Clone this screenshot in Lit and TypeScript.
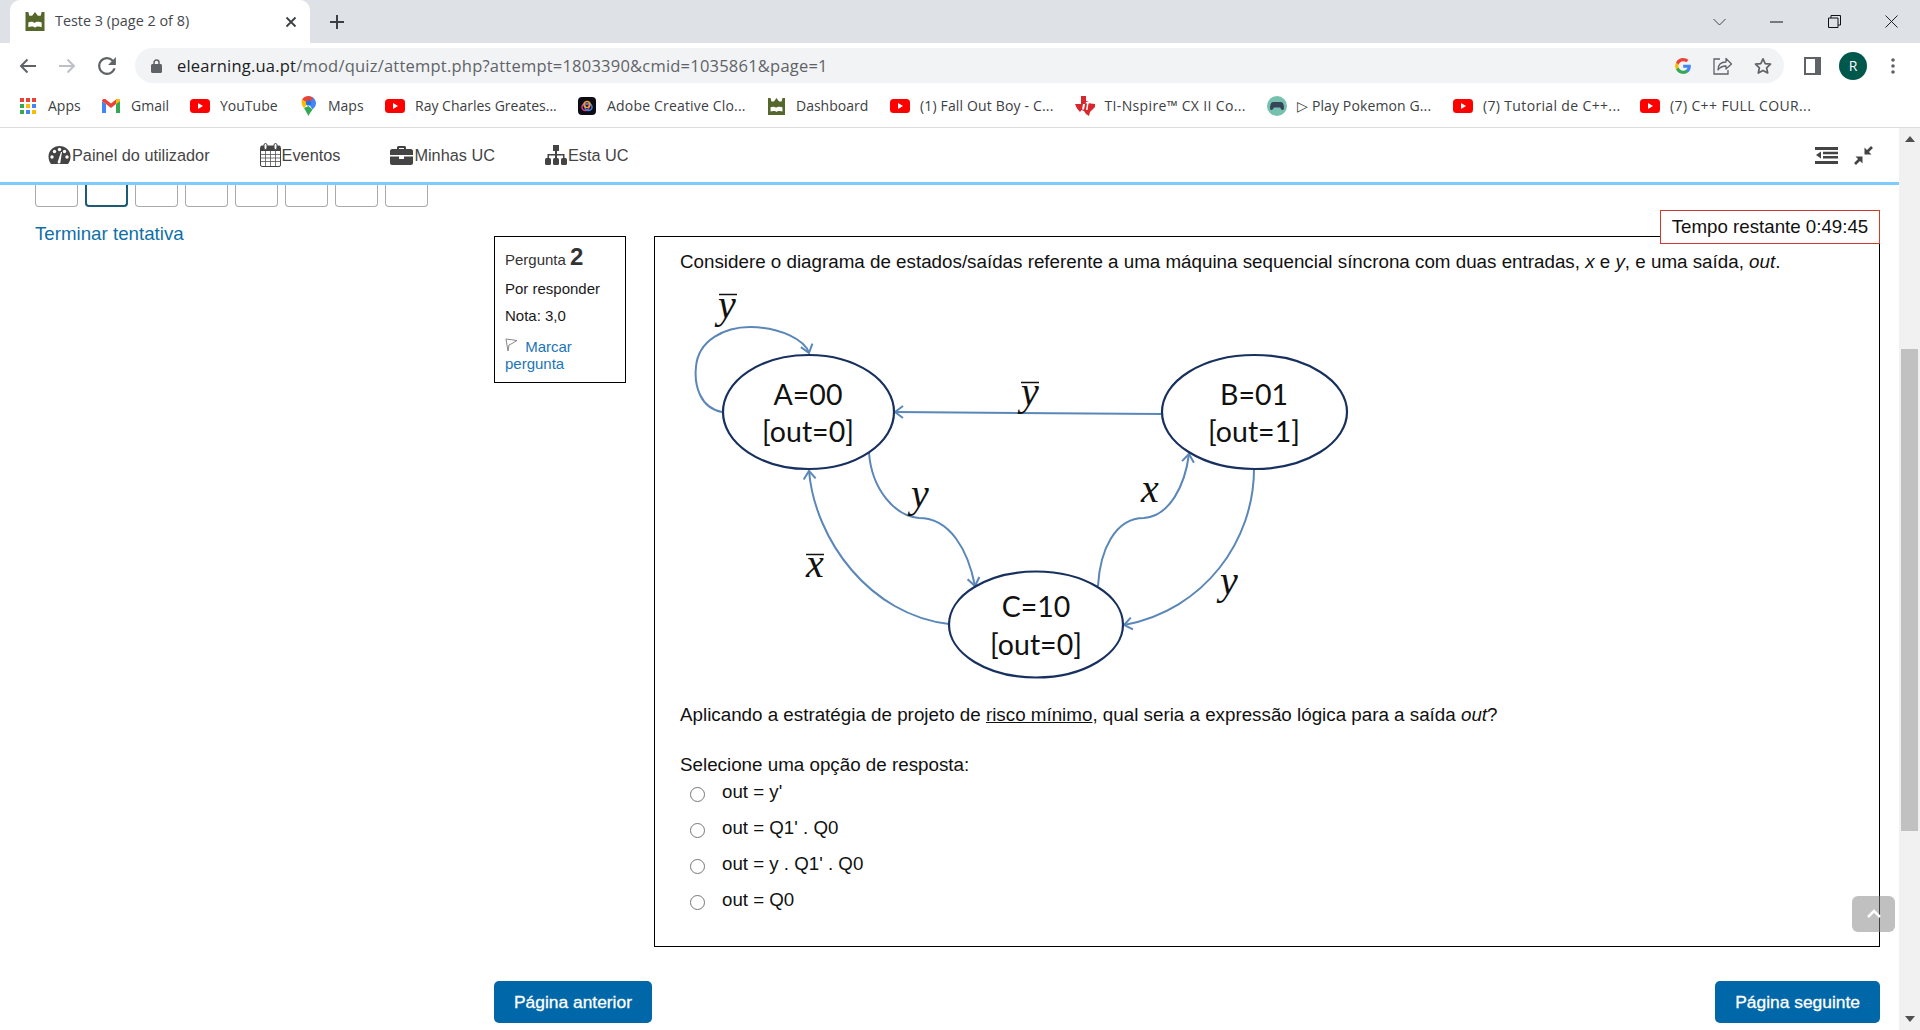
import { LitElement, html, css } from 'lit';
import { customElement } from 'lit/decorators.js';

// chrome favicons / icons
const castle = (w: number, h: number) => html`<svg width=${w} height=${h} viewBox="0 0 20 20">
  <path fill="#55672b" d="M0 0h3l1 4h3l3-4 3 4h3l1-4h3v20H0z" />
  <path fill="#fff" d="M3 11c2-1 5-1 6.500 .5C11 10 15 10 17 11v5c-2-1-6-1-7 .5C9 15 5 15 3 16z" />
</svg>`;

const youtube = html`<svg width="20" height="14" viewBox="0 0 20 14">
  <rect width="20" height="14" rx="3.500" fill="#f00" />
  <path d="M8 4l5 3-5 3z" fill="#fff" />
</svg>`;

const apps = html`<svg width="16" height="16" viewBox="0 0 16 16">
  ${[
    ['#ea4335', 0, 0], ['#ea4335', 6, 0], ['#ea4335', 12, 0],
    ['#34a853', 0, 6], ['#fbbc05', 6, 6], ['#4285f4', 12, 6],
    ['#34a853', 0, 12], ['#4285f4', 6, 12], ['#fbbc05', 12, 12],
  ].map(([c, x, y]) => html`<svg x=${x as number} y=${y as number} width="4" height="4"><rect width="4" height="4" fill=${c as string} /></svg>`)}
</svg>`;

const gmail = html`<svg width="18" height="14" viewBox="0 0 18 14">
  <path fill="#4285f4" d="M0 2v12h4V5z" />
  <path fill="#34a853" d="M14 5v9h4V2z" />
  <path fill="#ea4335" d="M0 2c0-2 2.500-2.500 4-1.500L9 4.500 14 .5C15.500-.5 18 0 18 2l-4 3-5 4-5-4z" />
  <path fill="#fbbc05" d="M14 .5C15.500-.5 18 0 18 2l-4 3z" />
</svg>`;

const maps = html`<svg width="15" height="20" viewBox="0 0 15 20">
  <path fill="#34a853" d="M3 12l4.500 8c1-2.500 2.500-4 4-6.500L7.500 10z" />
  <path fill="#fbbc05" d="M1 3.500C0 6 .5 9.500 3 12l4.500-5z" />
  <path fill="#4285f4" d="M7.500 0c3.500 0 7.500 3 7.500 7.500 0 2.500-2 4.500-3.500 6L7.500 7.500z" />
  <path fill="#ea4335" d="M1 3.500C2.500 1 5 0 7.500 0L12.500 2 7.500 7.500 4.500 5.500z" />
  <circle cx="7.500" cy="7" r="2.600" fill="#1a73e8" />
</svg>`;

const adobe = html`<svg width="18" height="18" viewBox="0 0 18 18">
  <rect width="18" height="18" rx="4" fill="#0c0c14" />
  <circle cx="7.500" cy="10" r="3.500" fill="none" stroke="#e63a8a" stroke-width="1.500" />
  <circle cx="10.500" cy="10" r="3.500" fill="none" stroke="#3a8ae6" stroke-width="1.500" />
  <circle cx="9" cy="7.500" r="3" fill="none" stroke="#f0a030" stroke-width="1.500" />
</svg>`;

const ti = html`<svg width="20" height="20" viewBox="0 0 20 20">
  <path fill="#d9262c" d="M6 0h5v5l3 1 1.500 1.500L20 8v3l-3 3-2 2-1 4-3-2-2-3-2.500-1-1.500 2-3-3.500L0 8h6z" />
  <path fill="#fff" d="M11 6h4l-.5 1.500h-1L12.500 14h-1.500l1-6.500h-1.300zM8 8h2l-1 5.500H7z" />
</svg>`;

const gamepad = html`<svg width="20" height="20" viewBox="0 0 20 20">
  <circle cx="10" cy="10" r="10" fill="#76c0ae" />
  <path fill="#36455a" d="M6 6h8c2 0 3 3 3 6 0 2-2 3-3 1l-1-1.500H7L6 13c-1 2-3 1-3-1 0-3 1-6 3-6z" />
</svg>`;

// w = width of the item, ls = tracking, segoe runs a bit wider than open sans on these
const bookmarks = [
  { icon: apps, label: 'Apps', w: 83, ls: 0 },
  { icon: gmail, label: 'Gmail', w: 89, ls: 0 },
  { icon: youtube, label: 'YouTube', w: 108, ls: 0 },
  { icon: maps, label: 'Maps', w: 87, ls: 0 },
  { icon: youtube, label: 'Ray Charles Greates...', w: 192, ls: 0 },
  { icon: adobe, label: 'Adobe Creative Clo...', w: 189, ls: 0.18 },
  { icon: castle(17, 21), label: 'Dashboard', w: 124, ls: 0 },
  { icon: youtube, label: '(1) Fall Out Boy - C...', w: 184.5, ls: 0.16 },
  { icon: ti, label: 'TI-Nspire™ CX II Co...', w: 192.5, ls: 0.35 },
  { icon: gamepad, label: '▷ Play Pokemon G...', w: 186, ls: 0.12 },
  { icon: youtube, label: '(7) Tutorial de C++...', w: 187, ls: 0.35 },
  { icon: youtube, label: '(7) C++ FULL COUR...', w: 180, ls: 0.38 },
];

// moodle top bar icons
const gauge = html`<svg width="23" height="20" viewBox="0 0 22 20">
  <path fill="#444" d="M11 1C5 1 0 5.500 0 11.500c0 3 1 5.500 2.500 7.500h17c1.500-2 2.500-4.500 2.500-7.500C22 5.500 17 1 11 1z" />
  <g fill="#fff">
    <circle cx="3.500" cy="12" r="1.700" /><circle cx="6" cy="6.500" r="1.700" /><circle cx="11" cy="4.500" r="1.700" />
    <circle cx="16" cy="6.500" r="1.700" /><circle cx="18.500" cy="12" r="1.700" />
    <path d="M9.500 16l3-9h1l-1.500 9.500a1.500 1.500 0 1 1-2.500-.5z" />
  </g>
</svg>`;

const calendar = html`<svg width="21" height="24" viewBox="0 0 21 24">
  <rect x=".5" y="3" width="20" height="20.500" rx="1.500" fill="#fff" stroke="#444" />
  <path fill="#444" d="M1 3h19v5H1z" />
  <path stroke="#555" stroke-width=".8" fill="none" d="M1 11.500h19M1 15h19M1 18.500h19M5.500 8v15M10.500 8v15M15.500 8v15" />
  <rect x="4" y=".5" width="3" height="6" rx="1.500" fill="#fff" stroke="#444" />
  <rect x="14" y=".5" width="3" height="6" rx="1.500" fill="#fff" stroke="#444" />
</svg>`;

const briefcase = html`<svg width="23" height="19" viewBox="0 0 23 19">
  <path fill="#444" d="M7 3V1.500C7 .7 7.700 0 8.500 0h6c.8 0 1.500.7 1.500 1.500V3h5c1 0 2 1 2 2v4H0V5c0-1 1-2 2-2zm2 0h5V2H9z" />
  <path fill="#444" d="M0 10.500h9V13h5v-2.500h9V17c0 1-1 2-2 2H2c-1 0-2-1-2-2z" />
</svg>`;

const sitemap = html`<svg width="22" height="20" viewBox="0 0 22 20">
  <path fill="#444" d="M8 0h6v6h-2v3h7.500v4H18v-2.500h-6V13h-2v-2.500H4V13H2.500V9H10V6H8z" />
  <rect x="0" y="13" width="6" height="7" rx="1.500" fill="#444" />
  <rect x="8" y="13" width="6" height="7" rx="1.500" fill="#444" />
  <rect x="16" y="13" width="6" height="7" rx="1.500" fill="#444" />
</svg>`;

const options = ["out = y'", "out = Q1' . Q0", "out = y . Q1' . Q0", 'out = Q0'];

@customElement('app-root')
export class AppRoot extends LitElement {
  static styles = css`
    :host {
      display: flex;
      flex-direction: column;
      width: 1920px;
      height: 1030px;
      overflow: hidden;
      background: #fff;
      font-family: 'Liberation Sans', Arial, sans-serif;
      color: #1a1a1a;
    }

    /* browser frame */
    .tabs {
      height: 43px;
      flex: none;
      display: flex;
      background: #dee1e6;
      font-family: 'Open Sans', sans-serif;
    }
    .tab {
      width: 300px;
      margin-left: 10px;
      box-sizing: border-box;
      padding: 0 13px 0 15px;
      display: flex;
      align-items: center;
      background: #fff;
      border-radius: 10px 10px 0 0;
      font-size: 14.4px;
      color: #45494e;
    }
    .tab span {
      margin: 0 0 2px 10px;
      flex: 1;
    }
    .plus {
      margin-left: 19px;
      align-self: center;
      display: flex;
    }
    .win {
      margin-left: auto;
      display: flex;
      align-items: center;
      padding-right: 22px;
      gap: 44.5px;
      height: 43px;
    }
    .toolbar {
      height: 42px;
      flex: none;
      box-sizing: border-box;
      padding-top: 3px;
      display: flex;
      align-items: center;
      font-family: 'Open Sans', sans-serif;
    }
    .nav-btns {
      width: 135px;
      box-sizing: border-box;
      padding-left: 19px;
      display: flex;
      gap: 21px;
      align-items: center;
    }
    .omni {
      width: 1649px;
      height: 35px;
      box-sizing: border-box;
      padding: 0 12px 0 16px;
      display: flex;
      align-items: center;
      background: #f1f3f4;
      border-radius: 18px;
    }
    .url {
      margin-left: 15px;
      font-size: 16.5px;
      letter-spacing: 0.22px;
      color: #5f6368;
      flex: 1;
    }
    .url b {
      font-weight: 400;
      color: #202124;
    }
    .omni-icons {
      display: flex;
      align-items: center;
      gap: 22px;
    }
    .tool-right {
      display: flex;
      align-items: center;
      padding-left: 20px;
      gap: 18px;
    }
    .tool-right .dots {
      margin-left: 6px;
    }
    .avatar {
      width: 28px;
      height: 28px;
      border-radius: 50%;
      background: #00574b;
      color: #fff;
      font-size: 14px;
      display: flex;
      align-items: center;
      justify-content: center;
    }
    .bookmarks {
      height: 43px;
      flex: none;
      box-sizing: border-box;
      border-bottom: 1px solid #dadce0;
      padding: 0 0 0 18px;
      display: flex;
      align-items: center;
      font-family: 'Open Sans', sans-serif;
      font-size: 14px;
      color: #3c4043;
      white-space: nowrap;
    }
    .bm {
      flex: none;
      display: flex;
      align-items: center;
      gap: 10px;
    }
    .bm .slot {
      width: 20px;
      display: flex;
      justify-content: center;
    }
    .bm svg {
      display: block;
    }
    .bm .label {
      margin-bottom: 1px;
    }

    /* page */
    .page {
      flex: 1;
      min-height: 0;
      display: flex;
    }
    .main {
      width: 1899px;
      position: relative;
    }
    .topnav {
      height: 57px;
      box-sizing: border-box;
      border-bottom: 3px solid #7fcbff;
      padding: 0 26px 0 48px;
      display: flex;
      align-items: center;
      gap: 50px;
      font-size: 16.3px;
      color: #444;
    }
    .topnav a {
      display: flex;
      align-items: center;
      gap: 1px;
    }
    .topnav .right {
      margin-left: auto;
      display: flex;
      align-items: center;
      gap: 16px;
    }
    .body {
      display: flex;
    }
    .side {
      width: 494px;
      flex: none;
      box-sizing: border-box;
      padding-left: 35px;
    }
    .qnboxes {
      display: flex;
      gap: 7px;
    }
    .qnbox {
      width: 43px;
      height: 22px;
      box-sizing: border-box;
      border: 1px solid #aaa;
      border-top: 0;
      border-radius: 0 0 4px 4px;
    }
    .qnbox.current {
      border: 2px solid #1d5a73;
      border-top: 0;
    }
    .finish {
      margin-top: 15px;
      font-size: 18.72px;
      line-height: 24px;
      color: #0f6fa8;
    }
    .quiz {
      width: 1386px;
      padding-top: 51px;
    }
    .question {
      display: flex;
      gap: 28px;
    }
    .info {
      width: 132px;
      height: 147px;
      flex: none;
      box-sizing: border-box;
      border: 1px solid #000;
      padding: 6px 10px 0;
      font-size: 15px;
    }
    .info .no {
      line-height: 28px;
      color: #333;
    }
    .info .no b {
      font-size: 24px;
    }
    .info .state {
      margin-top: 3px;
      line-height: 24px;
    }
    .info .grade {
      margin-top: 3px;
      line-height: 24px;
    }
    .info .flag {
      margin-top: 10px;
      line-height: 17px;
      color: #1b75bb;
    }
    .info .flag svg {
      margin-right: 3px;
    }
    .content {
      width: 1226px;
      height: 711px;
      box-sizing: border-box;
      border: 1px solid #000;
      padding: 12px 0 0 25px;
      position: relative;
      font-size: 18.8px;
      line-height: 26px;
      color: #111;
    }
    .timer {
      position: absolute;
      top: -27px;
      right: -1px;
      width: 220px;
      height: 34px;
      box-sizing: border-box;
      border: 1px solid #cf3a2c;
      background: #fff;
      font-size: 18.72px;
      text-align: center;
      line-height: 31px;
    }
    .diagram {
      display: block;
      margin-left: -25px;
    }
    .diagram .state-text {
      font-family: Lato, sans-serif;
      font-size: 28.5px;
      text-anchor: middle;
      fill: #111;
    }
    .diagram .math {
      font-family: 'Liberation Serif', serif;
      font-style: italic;
      font-size: 40px;
      text-anchor: middle;
      fill: #111;
    }
    .prompt {
      margin-top: 24px;
    }
    .answers {
      margin-top: -4px;
      padding-left: 10px;
    }
    .answer {
      height: 36px;
      display: flex;
      align-items: center;
      font-size: 18.72px;
    }
    .answer input {
      width: 15px;
      height: 15px;
      margin: 5px 17px 0 0;
      accent-color: #767676;
    }
    .underline {
      text-decoration: underline;
    }
    .buttons {
      margin-top: 34px;
      display: flex;
      justify-content: space-between;
    }
    .btn {
      height: 42px;
      box-sizing: border-box;
      padding: 0 20px;
      display: flex;
      align-items: center;
      background: #0067a8;
      color: #fff;
      border-radius: 5px;
      font-size: 17.4px;
      -webkit-text-stroke: 0.3px #fff;
    }
    .to-top {
      position: absolute;
      left: 1852px;
      top: 768px;
      width: 43px;
      height: 36px;
      border-radius: 6px;
      background: rgba(130, 130, 130, 0.5);
      display: flex;
      align-items: center;
      justify-content: center;
    }

    /* scrollbar */
    .scroll {
      width: 21px;
      flex: none;
      display: flex;
      flex-direction: column;
      align-items: center;
      background: #f1f1f1;
    }
    .arrow-up,
    .arrow-down {
      width: 0;
      height: 0;
      border-left: 5px solid transparent;
      border-right: 5px solid transparent;
    }
    .arrow-up {
      margin-top: 8px;
      border-bottom: 6px solid #505050;
    }
    .arrow-down {
      margin-top: 185px;
      border-top: 6px solid #505050;
    }
    .thumb {
      margin-top: 207px;
      width: 17px;
      height: 482px;
      background: #c1c1c1;
    }
  `;

  render() {
    return html`
      <div class="tabs">
        <div class="tab">
          ${castle(20, 19)}
          <span>Teste 3 (page 2 of 8)</span>
          <svg width="12" height="12" viewBox="0 0 12 12"><path d="M1.500 1.500l9 9m0-9l-9 9" stroke="#3c4043" stroke-width="1.800" /></svg>
        </div>
        <div class="plus">
          <svg width="16" height="16" viewBox="0 0 16 16"><path d="M8 1v14M1 8h14" stroke="#3c4043" stroke-width="2" /></svg>
        </div>
        <div class="win">
          <svg width="13" height="8" viewBox="0 0 13 8"><path d="M.5 1l6 6 6-6" fill="none" stroke="#444" /></svg>
          <svg width="13" height="2" viewBox="0 0 13 2"><path d="M0 1h13" stroke="#111" /></svg>
          <svg width="13" height="13" viewBox="0 0 13 13"><path d="M.5 3h9.500v9.500H.5zM3 3V.5h9.500V10H10" fill="none" stroke="#111" /></svg>
          <svg width="13" height="13" viewBox="0 0 13 13"><path d="M.5.500l12 12m0-12l-12 12" stroke="#222" /></svg>
        </div>
      </div>

      <div class="toolbar">
        <div class="nav-btns">
          <svg width="18" height="16" viewBox="0 0 18 16"><path d="M17 8H2M8.500 1.500L2 8l6.500 6.500" fill="none" stroke="#5f6368" stroke-width="2" /></svg>
          <svg width="18" height="16" viewBox="0 0 18 16"><path d="M1 8h15M9.500 1.500L16 8l-6.500 6.500" fill="none" stroke="#bdc1c6" stroke-width="2" /></svg>
          <svg width="20" height="20" viewBox="3 3 18 18"><path fill="#5f6368" d="M17.650 6.350A7.958 7.958 0 0 0 12 4c-4.420 0-7.990 3.580-7.990 8s3.570 8 7.990 8c3.730 0 6.840-2.550 7.730-6h-2.080A5.990 5.990 0 0 1 12 18c-3.310 0-6-2.690-6-6s2.690-6 6-6c1.660 0 3.140.690 4.220 1.780L13 11h7V4l-2.350 2.350z" /></svg>
        </div>
        <div class="omni">
          <svg width="11" height="14" viewBox="0 0 11 14"><path fill="#5f6368" d="M1.500 5h8c.8 0 1.500.7 1.500 1.500v6c0 .8-.7 1.500-1.500 1.500h-8C.7 14 0 13.300 0 12.500v-6C0 5.700.7 5 1.500 5z" /><path fill="none" stroke="#5f6368" stroke-width="1.500" d="M3 5V3.500a2.500 2.500 0 0 1 5 0V5" /></svg>
          <div class="url"><b>elearning.ua.pt</b>/mod/quiz/attempt.php?attempt=1803390&amp;cmid=1035861&amp;page=1</div>
          <div class="omni-icons">
            <svg width="16" height="16" viewBox="0 0 24 24">
              <path fill="#4285f4" d="M23.745 12.270c0-.790-.070-1.540-.190-2.270h-11.300v4.510h6.470c-.290 1.480-1.140 2.730-2.400 3.580v3h3.860c2.260-2.090 3.560-5.170 3.560-8.820z" />
              <path fill="#34a853" d="M12.255 24c3.240 0 5.950-1.080 7.930-2.910l-3.860-3c-1.080.720-2.450 1.160-4.070 1.160-3.130 0-5.780-2.110-6.730-4.960h-3.980v3.090C3.515 21.300 7.565 24 12.255 24z" />
              <path fill="#fbbc05" d="M5.525 14.290c-.250-.720-.380-1.490-.380-2.290s.140-1.570.380-2.290V6.620h-3.980a11.860 11.860 0 0 0 0 10.760l3.980-3.090z" />
              <path fill="#ea4335" d="M12.255 4.750c1.770 0 3.350.610 4.600 1.800l3.420-3.420C18.205 1.190 15.495 0 12.255 0c-4.690 0-8.740 2.700-10.710 6.620l3.980 3.090c.950-2.850 3.600-4.960 6.730-4.960z" />
            </svg>
            <svg width="19" height="18" viewBox="0 0 19 18"><path d="M7 2H1v15h14v-4" fill="none" stroke="#5f6368" stroke-width="1.300" /><path d="M5 13c0-5 3-8 8-8V1.500L18.500 7 13 12V9c-4 0-6 1-8 4z" fill="none" stroke="#5f6368" stroke-width="1.300" stroke-linejoin="round" /></svg>
            <svg width="18" height="18" viewBox="0 0 18 18"><path d="M9 1.800l2.200 4.800 5.300.6-3.900 3.600 1.100 5.200L9 13.400 4.300 16l1.100-5.200-3.900-3.600 5.300-.6z" fill="none" stroke="#5f6368" stroke-width="1.700" stroke-linejoin="round" /></svg>
          </div>
        </div>
        <div class="tool-right">
          <svg width="17" height="18" viewBox="0 0 17 18"><path fill="#5f6368" fill-rule="evenodd" d="M0 0h17v18H0zM2 2v14h9V2z" /></svg>
          <div class="avatar">R</div>
          <svg class="dots" width="4" height="16" viewBox="0 0 4 16"><circle cx="2" cy="2" r="1.800" fill="#5f6368" /><circle cx="2" cy="8" r="1.800" fill="#5f6368" /><circle cx="2" cy="14" r="1.800" fill="#5f6368" /></svg>
        </div>
      </div>

      <div class="bookmarks">
        ${bookmarks.map(
          (b) => html`<div class="bm" style="width:${b.w}px">
            <div class="slot">${b.icon}</div>
            <span class="label" style="letter-spacing:${b.ls}px">${b.label}</span>
          </div>`
        )}
      </div>

      <div class="page">
        <div class="main">
          <div class="topnav">
            <a>${gauge}Painel do utilizador</a>
            <a>${calendar}Eventos</a>
            <a>${briefcase}Minhas UC</a>
            <a>${sitemap}Esta UC</a>
            <div class="right">
              <svg width="23" height="17" viewBox="0 0 23 17"><path fill="#444" d="M0 0h23v3H0zM8 4.700h15v2.500H8zM8 9h15v2.500H8zM0 14h23v3H0zM6 4.500v7L1 8z" /></svg>
              <svg width="19" height="19" viewBox="0 0 19 19"><path fill="#444" d="M10.500 1.500v7h7z" /><path d="M18 1l-5.500 5.500" stroke="#444" stroke-width="2.600" /><path fill="#444" d="M1.500 10.500h7v7z" /><path d="M1 18l5.500-5.500" stroke="#444" stroke-width="2.600" /></svg>
            </div>
          </div>
          <div class="body">
            <div class="side">
              <div class="qnboxes">
                ${[0, 1, 2, 3, 4, 5, 6, 7].map((n) => html`<div class="qnbox ${n === 1 ? 'current' : ''}"></div>`)}
              </div>
              <div class="finish">Terminar tentativa</div>
            </div>
            <div class="quiz">
              <div class="question">
                <div class="info">
                  <div class="no">Pergunta <b>2</b></div>
                  <div class="state">Por responder</div>
                  <div class="grade">Nota: 3,0</div>
                  <div class="flag">
                    <svg width="13" height="14" viewBox="0 0 13 14"><path d="M1 1l11 1.500-5 3 -3 1.500-1 6z" fill="none" stroke="#888" /></svg>
                    Marcar pergunta
                  </div>
                </div>
                <div class="content">
                  <div class="timer">Tempo restante 0:49:45</div>
                  <div>Considere o diagrama de estados/saídas referente a uma máquina sequencial síncrona com duas entradas, <i>x</i> e <i>y</i>, e uma saída, <i>out</i>.</div>
                  ${this.renderDiagram()}
                  <div>Aplicando a estratégia de projeto de <span class="underline">risco mínimo</span>, qual seria a expressão lógica para a saída <i>out</i>?</div>
                  <div class="prompt">Selecione uma opção de resposta:</div>
                  <div class="answers">
                    ${options.map((o) => html`<label class="answer"><input type="radio" name="answer" />${o}</label>`)}
                  </div>
                </div>
              </div>
              <div class="buttons">
                <div class="btn">Página anterior</div>
                <div class="btn">Página seguinte</div>
              </div>
            </div>
          </div>
          <div class="to-top">
            <svg width="16" height="10" viewBox="0 0 16 10"><path d="M2 8l6-6 6 6" fill="none" stroke="#fff" stroke-width="2.500" /></svg>
          </div>
        </div>
        <div class="scroll">
          <div class="arrow-up"></div>
          <div class="thumb"></div>
          <div class="arrow-down"></div>
        </div>
      </div>
    `;
  }

  // the state machine picture, drawn in page coordinates through the viewBox
  private renderDiagram() {
    const edge = '#5a87b8';
    const ring = '#17305e';
    return html`<svg class="diagram" width="720" height="427" viewBox="655 275 720 427">
      <defs>
        <marker id="head" markerWidth="14" markerHeight="14" refX="11" refY="7" orient="auto" markerUnits="userSpaceOnUse">
          <path d="M3 1L11 7L3 13" fill="none" stroke=${edge} stroke-width="2" />
        </marker>
      </defs>
      <g fill="none" stroke=${edge} stroke-width="2">
        <path marker-end="url(#head)" d="M722 412C700 408 694 385 696 367C698 340 725 327 750 327C780 327 805 340 809 353" />
        <path marker-end="url(#head)" d="M1161 414L895 412" />
        <path marker-end="url(#head)" d="M869 453C872 490 895 516 919 518C950 518 968 550 975 586" />
        <path marker-end="url(#head)" d="M1098 586C1100 550 1115 518 1144 518C1170 516 1185 485 1189 454" />
        <path marker-end="url(#head)" d="M1254 469C1254 540 1205 610 1124 625" />
        <path marker-end="url(#head)" d="M949 624C870 615 815 540 809 471" />
      </g>
      <g fill="none" stroke=${ring} stroke-width="2.200">
        <ellipse cx="808.500" cy="412" rx="85.500" ry="57" />
        <ellipse cx="1254.500" cy="412" rx="92.500" ry="57" />
        <ellipse cx="1036" cy="624.500" rx="87" ry="53" />
      </g>
      <text class="state-text" x="808" y="405">A=00</text>
      <text class="state-text" x="808" y="442">[out=0]</text>
      <text class="state-text" x="1254" y="405">B=01</text>
      <text class="state-text" x="1254" y="442">[out=1]</text>
      <text class="state-text" x="1036" y="617">C=10</text>
      <text class="state-text" x="1036" y="655">[out=0]</text>
      <text class="math" x="727" y="318">y</text>
      <text class="math" x="1030" y="405">y</text>
      <text class="math" x="920" y="507">y</text>
      <text class="math" x="1150" y="502">x</text>
      <text class="math" x="815" y="577">x</text>
      <text class="math" x="1229" y="594">y</text>
      <path d="M719 294.500h18M1021 382.500h18M806 554.500h18" stroke="#111" stroke-width="1.500" />
    </svg>`;
  }
}
